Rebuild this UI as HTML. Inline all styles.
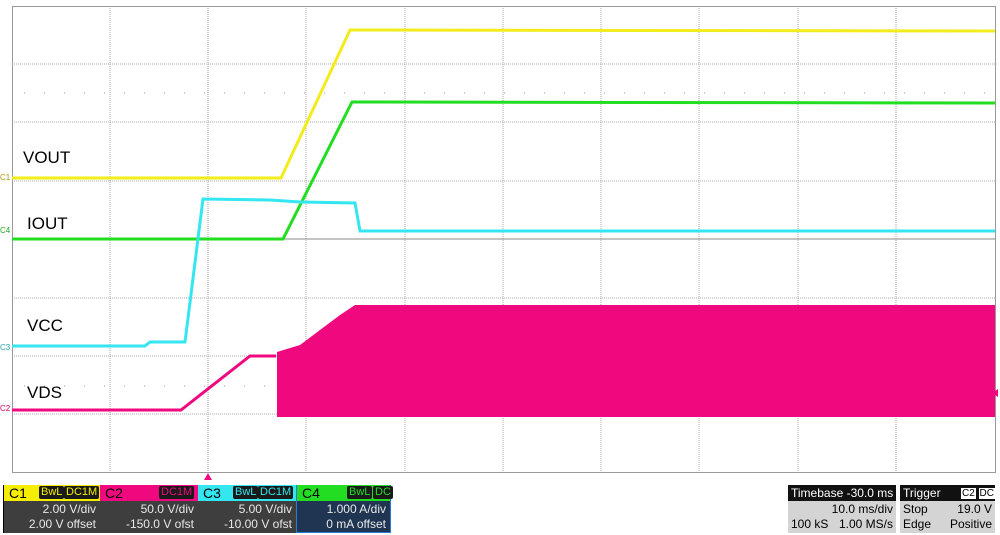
<!DOCTYPE html>
<html><head><meta charset="utf-8"><style>
body{margin:0;width:1000px;height:535px;background:#fff;overflow:hidden;font-family:"Liberation Sans",sans-serif;position:relative}
.p{position:absolute;font-size:12px}
.ch{position:absolute;top:485px;height:48px;background:#3e3e3e;box-sizing:border-box}
.ch .h{height:16px;font-size:14px;line-height:16px;padding-left:5px;position:relative;color:#000}
.ch .b{color:#e8e8e8;font-size:12px;text-align:right;padding-right:4px;line-height:15px;padding-top:1px}
.tag{position:absolute;top:1px;height:13px;line-height:13px;font-size:11px;background:#1a1a1a;padding:0 2px;border-radius:2px}
.lbl{position:absolute;font-size:17px;color:#000}
</style></head><body>
<svg width="1000" height="535" style="position:absolute;left:0;top:0">
<g stroke="#aaa" stroke-width="1" stroke-dasharray="1,1">
<line x1="110" y1="6" x2="110" y2="473"/><line x1="208" y1="6" x2="208" y2="473"/><line x1="306" y1="6" x2="306" y2="473"/><line x1="405" y1="6" x2="405" y2="473"/><line x1="503" y1="6" x2="503" y2="473"/><line x1="601" y1="6" x2="601" y2="473"/><line x1="699" y1="6" x2="699" y2="473"/><line x1="798" y1="6" x2="798" y2="473"/><line x1="896" y1="6" x2="896" y2="473"/>
<line x1="12" y1="64" x2="995" y2="64"/><line x1="12" y1="122" x2="995" y2="122"/><line x1="12" y1="181" x2="995" y2="181"/><line x1="12" y1="239" x2="995" y2="239"/><line x1="12" y1="298" x2="995" y2="298"/><line x1="12" y1="356" x2="995" y2="356"/><line x1="12" y1="414" x2="995" y2="414"/>
</g>
<g stroke="#999" stroke-width="1" stroke-dasharray="1,19" stroke-dashoffset="-12">
<line x1="12" y1="93" x2="995" y2="93"/><line x1="12" y1="386" x2="995" y2="386"/>
</g>
<line x1="12" y1="239" x2="995" y2="239" stroke="#888" stroke-width="1"/>
<rect x="12.5" y="6.5" width="983" height="466" fill="none" stroke="#999"/>
<polyline points="12,178 281,178 350,30 995,31" fill="none" stroke="#f2ec1c" stroke-width="3"/>
<polyline points="12,239 283,239 352,102 995,103" fill="none" stroke="#22dd22" stroke-width="3"/>
<polyline points="12,346 145,346 150,342 185,342 203,199 270,200 300,202 355,203 360,231 995,231" fill="none" stroke="#33e6f0" stroke-width="3"/>
<polyline points="12,410 181,410 250,356 276,356" fill="none" stroke="#f0087e" stroke-width="3"/>
<polygon points="277,352 300,345 320,330 340,315 355,305 995,305 995,417 277,417" fill="#f0087e"/>
<polygon points="208,473 204,480 212,480" fill="#f0087e"/>
<polygon points="992,393 998,389 998,397" fill="#f0087e"/>
<text x="0" y="180" font-size="8" fill="#aa9900">C1</text>
<text x="0" y="233" font-size="8" fill="#22aa22">C4</text>
<text x="0" y="350" font-size="8" fill="#22aaaa">C3</text>
<text x="0" y="411" font-size="8" fill="#cc0066">C2</text>
</svg>
<div class="lbl" style="left:23px;top:148px">VOUT</div>
<div class="lbl" style="left:27px;top:214px">IOUT</div>
<div class="lbl" style="left:27px;top:316px">VCC</div>
<div class="lbl" style="left:27px;top:383px">VDS</div>

<div class="ch" style="left:3px;width:97px;border-left:1px solid #000"><div class="h" style="background:#f5ee00">C1<span class="tag" style="left:35px;color:#f5ee00">BwL</span><span class="tag" style="left:60px;color:#f5ee00">DC1M</span></div><div class="b">2.00 V/div<br>2.00 V offset</div></div>
<div class="ch" style="left:100px;width:98px"><div class="h" style="background:#f0087e">C2<span class="tag" style="left:59px;color:#f0087e">DC1M</span></div><div class="b">50.0 V/div<br>-150.0 V ofst</div></div>
<div class="ch" style="left:198px;width:98px"><div class="h" style="background:#33e6f0">C3<span class="tag" style="left:35px;color:#33e6f0">BwL</span><span class="tag" style="left:60px;color:#33e6f0">DC1M</span></div><div class="b">5.00 V/div<br>-10.00 V ofst</div></div>
<div class="ch" style="left:296px;width:95px;background:#1f3552;border:1px solid #2a7bd8;border-top:none"><div class="h" style="background:#22dd22">C4<span class="tag" style="left:50px;color:#22dd22">BwL</span><span class="tag" style="left:76px;color:#22dd22">DC</span></div><div class="b">1.000 A/div<br>0 mA offset</div></div>

<div style="position:absolute;left:788px;top:485px;width:108px;height:48px;background:#d4d4d4;font-size:12px">
<div style="background:#111;color:#fff;height:16px;line-height:16px;padding-left:3px">Timebase -30.0 ms</div>
<div style="text-align:right;padding-right:3px;line-height:15px;padding-top:1px">10.0 ms/div</div>
<div style="line-height:15px;padding-left:3px">100 kS<span style="float:right;padding-right:3px">1.00 MS/s</span></div></div>
<div style="position:absolute;left:900px;top:485px;width:95px;height:48px;background:#d4d4d4;font-size:12px">
<div style="background:#111;color:#fff;height:16px;line-height:16px;padding-left:3px">Trigger<span style="float:right;font-size:10px;margin-top:1px"><span style="background:#fff;color:#000;padding:0 1px">C2</span> <span style="background:#fff;color:#000;padding:0 1px">DC</span></span></div>
<div style="line-height:15px;padding:1px 3px 0">Stop<span style="float:right">19.0 V</span></div>
<div style="line-height:15px;padding:0 3px">Edge<span style="float:right">Positive</span></div></div>
</body></html>
